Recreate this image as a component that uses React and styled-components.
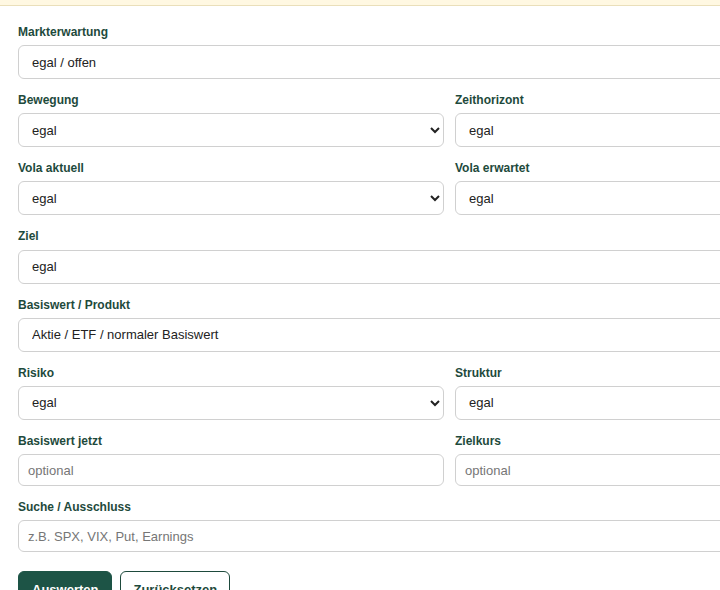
import React from "react";
import styled, { createGlobalStyle } from "styled-components";

const Global = createGlobalStyle`
  html, body { margin: 0; padding: 0; background: #fff; overflow: hidden; }
  body { font-family: "Liberation Sans", Arial, sans-serif; }
  * { box-sizing: border-box; }
`;

const TopBand = styled.div`
  height: 6px;
  background: #fff8e2;
  border-bottom: 1px solid #eadfba;
`;

const Form = styled.form`
  width: 881px;
  padding: 18px 18px 0 18px;
  display: grid;
  grid-template-columns: 426px 426px;
  column-gap: 11px;
  row-gap: 13px;
`;

const Field = styled.div`
  display: flex;
  flex-direction: column;
  grid-column: ${(p) => (p.$full ? "1 / -1" : "auto")};
`;

const Label = styled.label`
  font-size: 12px;
  line-height: 16.15px;
  font-weight: 700;
  color: #1e4a3c;
  margin-bottom: 5px;
`;

const Select = styled.select`
  height: 34px;
  width: 100%;
  padding: 0 9px;
  font-family: "Liberation Sans", Arial, sans-serif;
  font-size: 13px;
  color: #222;
  background: #fff;
  border: 1px solid #d0d0d0;
  border-radius: 6px;
`;

const Input = styled.input`
  height: 32px;
  width: 100%;
  padding: 0 9px;
  font-family: "Liberation Sans", Arial, sans-serif;
  font-size: 13px;
  color: #222;
  background: #fff;
  border: 1px solid #d0d0d0;
  border-radius: 6px;
  &::placeholder { color: #767676; }
`;

const Actions = styled.div`
  grid-column: 1 / -1;
  display: flex;
  gap: 8px;
  margin-top: 6px;
`;

const Button = styled.button`
  height: 36px;
  padding: 0 ${(p) => (p.$primary ? "13px" : "12px")};
  font-family: "Liberation Sans", Arial, sans-serif;
  font-size: 13px;
  font-weight: 700;
  border-radius: 6px;
  cursor: pointer;
  background: ${(p) => (p.$primary ? "#1d5446" : "#fff")};
  color: ${(p) => (p.$primary ? "#fff" : "#1e4a3c")};
  border: 1px solid ${(p) => (p.$primary ? "#1d5446" : "#1e4a3c")};
`;

const SelectField = ({ label, value, full }) => (
  <Field $full={full}>
    <Label>{label}</Label>
    <Select defaultValue={value}>
      <option>{value}</option>
    </Select>
  </Field>
);

const InputField = ({ label, placeholder, full }) => (
  <Field $full={full}>
    <Label>{label}</Label>
    <Input placeholder={placeholder} />
  </Field>
);

export default function App() {
  return (
    <>
      <Global />
      <TopBand />
      <Form onSubmit={(e) => e.preventDefault()}>
        <SelectField full label="Markterwartung" value="egal / offen" />
        <SelectField label="Bewegung" value="egal" />
        <SelectField label="Zeithorizont" value="egal" />
        <SelectField label="Vola aktuell" value="egal" />
        <SelectField label="Vola erwartet" value="egal" />
        <SelectField full label="Ziel" value="egal" />
        <SelectField full label="Basiswert / Produkt" value="Aktie / ETF / normaler Basiswert" />
        <SelectField label="Risiko" value="egal" />
        <SelectField label="Struktur" value="egal" />
        <InputField label="Basiswert jetzt" placeholder="optional" />
        <InputField label="Zielkurs" placeholder="optional" />
        <InputField full label="Suche / Ausschluss" placeholder="z.B. SPX, VIX, Put, Earnings" />
        <Actions>
          <Button $primary type="submit">Auswerten</Button>
          <Button type="button">Zurücksetzen</Button>
        </Actions>
      </Form>
    </>
  );
}
